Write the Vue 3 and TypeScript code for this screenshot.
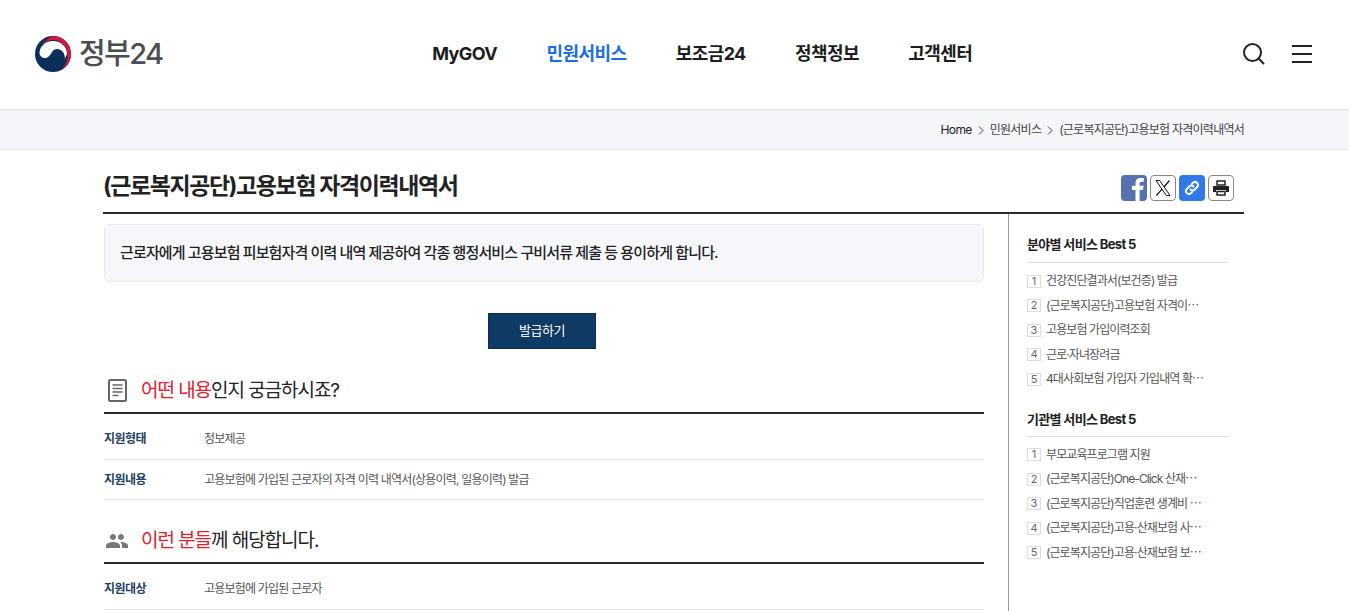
<script setup lang="ts">
const nav = [
  { label: 'MyGOV', active: false },
  { label: '민원서비스', active: true },
  { label: '보조금24', active: false },
  { label: '정책정보', active: false },
  { label: '고객센터', active: false },
]
const best1 = ['건강진단결과서(보건증) 발급', '(근로복지공단)고용보험 자격이⋯', '고용보험 가입이력조회', '근로·자녀장려금', '4대사회보험 가입자 가입내역 확⋯']
const best2 = ['부모교육프로그램 지원', '(근로복지공단)One-Click 산재⋯', '(근로복지공단)직업훈련 생계비 ⋯', '(근로복지공단)고용·산재보험 사⋯', '(근로복지공단)고용·산재보험 보⋯']
const groups = [
  { title: '분야별 서비스 Best 5', items: best1 },
  { title: '기관별 서비스 Best 5', items: best2 },
]
</script>

<template>
  <div class="page">
    <header class="top">
      <a class="logo">
        <svg class="emblem" width="38" height="38" viewBox="0 0 38 38">
          <circle cx="19" cy="19" r="18" fill="#0b2f5b" />
          <path d="M8 10C12 4 17 1.500 21 1 30 2 37 10 37 19 37 26 33 32 27 35.500 31 31 34 26 33.500 19 33 11 27 5 19 5 15 5 11 7 8 10Z" fill="#d6173a" />
          <path d="M5.500 19C5 12 11 6 19 6 27 6 33 12 33 19L26 34 10 30Z" fill="#fff" />
          <path d="M26 34.500C31 30 32.500 22 29 17 26 13 20 13 18 17 16 21 13 23.500 10 23 7.500 22.500 6 21 5.500 19 5 27 11 36 19 36 22 36 24 35.500 26 34.500Z" fill="#0b2f5b" />
        </svg>
        <span class="logo-text">정부24</span>
      </a>
      <nav class="nav">
        <a v-for="n in nav" :key="n.label" :class="{ active: n.active }">{{ n.label }}</a>
      </nav>
      <div class="tools">
        <svg width="24" height="24" viewBox="0 0 24 24" fill="none" stroke="#222" stroke-width="2">
          <circle cx="10.500" cy="10.500" r="8.500" />
          <path d="M16.800 16.800 22 22" />
        </svg>
        <div class="burger"><i></i><i></i><i></i></div>
      </div>
    </header>

    <div class="crumb">
      <div class="crumb-in">
        <span class="home">Home</span>
        <svg class="chev" width="6" height="9" viewBox="0 0 6 9" fill="none" stroke="#444"><path d="M1 .5 5 4.500 1 8.500" /></svg>
        <span>민원서비스</span>
        <svg class="chev" width="6" height="9" viewBox="0 0 6 9" fill="none" stroke="#444"><path d="M1 .5 5 4.500 1 8.500" /></svg>
        <span>(근로복지공단)고용보험 자격이력내역서</span>
      </div>
    </div>

    <main class="wrap">
      <div class="title-row">
        <h1>(근로복지공단)고용보험 자격이력내역서</h1>
        <div class="share">
          <span class="sq fb">
            <svg width="26" height="26" viewBox="0 0 26 26"><path d="M14.500 26V15h-3.600v-4.200h3.600V8.200c0-3.400 2.100-5.200 5-5.200h3.300v3.800h-2.200c-1.600 0-2 .8-2 1.900v2.100h4l-.6 4.200h-3.400v11z" fill="#fff" /></svg>
          </span>
          <span class="sq out">
            <svg width="18" height="18" viewBox="0 0 18 18" fill="none" stroke="#111"><path d="M2 1.500h3.600L16 16.500h-3.600z" /><path d="M15.400 1.500 10 8M8 10.200 2.400 16.500" stroke-width="1.200" /></svg>
          </span>
          <span class="sq link">
            <svg width="18" height="18" viewBox="0 0 18 18" fill="none" stroke="#fff" stroke-width="2" stroke-linecap="round"><path d="M7.500 10.500a3 3 0 0 0 4.300 0l2.600-2.700a3 3 0 0 0-4.200-4.200L9 4.800" /><path d="M10.500 7.500a3 3 0 0 0-4.300 0L3.600 10.200a3 3 0 0 0 4.200 4.200L9 13.200" /></svg>
          </span>
          <span class="sq out">
            <svg width="18" height="18" viewBox="0 0 18 18"><path d="M5 2h8v4H5z" fill="none" stroke="#222" stroke-width="1.500" /><path d="M2 7h14a1 1 0 0 1 1 1v5h-3v-2H4v2H1V8a1 1 0 0 1 1-1z" fill="#222" /><path d="M5 12.500h8V16H5z" fill="none" stroke="#222" stroke-width="1.500" /></svg>
          </span>
        </div>
      </div>

      <div class="cols">
        <section class="left">
          <div class="notice">근로자에게 고용보험 피보험자격 이력 내역 제공하여 각종 행정서비스 구비서류 제출 등 용이하게 합니다.</div>
          <div class="btn-row"><a class="btn">발급하기</a></div>

          <div class="sec-head">
            <svg width="24" height="24" viewBox="0 0 24 24" fill="none" stroke="#666" stroke-width="2">
              <rect x="4" y="2" width="17" height="21" rx="1.500" />
              <path d="M7.500 7h10M7.500 10.500h10M7.500 14h10M7.500 17.500h6" stroke-width="1.700" />
            </svg>
            <h2><em>어떤 내용</em>인지 궁금하시죠?</h2>
          </div>
          <dl class="row"><dt>지원형태</dt><dd>정보제공</dd></dl>
          <dl class="row"><dt>지원내용</dt><dd>고용보험에 가입된 근로자의 자격 이력 내역서(상용이력, 일용이력) 발급</dd></dl>

          <div class="sec-head">
            <svg class="people" width="24" height="24" viewBox="0 0 24 24" fill="#777">
              <path d="M16 11c1.660 0 2.990-1.340 2.990-3S17.660 5 16 5s-3 1.340-3 3 1.340 3 3 3zm-8 0c1.660 0 2.990-1.340 2.990-3S9.660 5 8 5 5 6.340 5 8s1.340 3 3 3zm0 2c-2.330 0-7 1.170-7 3.500V19h14v-2.500C15 14.170 10.330 13 8 13zm8 0c-.290 0-.620.020-.970.050 1.160.840 1.970 1.970 1.970 3.450V19h6v-2.500c0-2.330-4.670-3.500-7-3.500z" />
            </svg>
            <h2><em>이런 분들</em>께 해당합니다.</h2>
          </div>
          <dl class="row"><dt>지원대상</dt><dd>고용보험에 가입된 근로자</dd></dl>
        </section>

        <aside class="side">
          <div v-for="g in groups" :key="g.title" class="group">
            <h3>{{ g.title }}</h3>
            <ol>
              <li v-for="(it, i) in g.items" :key="it">
                <span class="num">{{ i + 1 }}</span>
                <span class="txt">{{ it }}</span>
              </li>
            </ol>
          </div>
        </aside>
      </div>
    </main>
  </div>
</template>

<style>
html, body { margin: 0; background: #fff; overflow: hidden; }
</style>

<style scoped>
.page {
  height: 611px;
  overflow: hidden;
  font-family: Inter, "Noto Sans CJK KR", sans-serif;
  color: #222;
}
.top {
  height: 110px;
  box-sizing: border-box;
  border-bottom: 1px solid #e0e2e6;
  display: flex;
  align-items: center;
  padding: 0 37px 1px 35px;
  justify-content: space-between;
}
.logo { display: flex; align-items: center; gap: 7px; }
.emblem { margin-left: -1px; }
.logo-text {
  font-size: 29px;
  font-weight: 500;
  color: #4a4d52;
  letter-spacing: -1.6px;
  line-height: 38px;
}
.nav {
  display: flex;
  gap: 49.4px;
  font-size: 18px;
  font-weight: 700;
  line-height: 24px;
  letter-spacing: -0.6px;
  color: #1d1d1d;
}
.nav .active { color: #1a6fe0; }
.tools { display: flex; align-items: center; gap: 26px; }
.burger { width: 20px; display: flex; flex-direction: column; gap: 6px; }
.burger i { display: block; height: 2px; background: #222; }
.crumb {
  height: 40px;
  box-sizing: border-box;
  background: #f4f6fa;
  border-bottom: 1px solid #e8eaee;
}
.crumb-in {
  width: 1140px;
  margin-left: 104px;
  height: 39px;
  display: flex;
  justify-content: flex-end;
  align-items: center;
  gap: 6px;
  font-size: 12px;
  line-height: 18px;
  letter-spacing: -0.75px;
  color: #444;
}
.crumb-in .home { color: #222; letter-spacing: -0.6px; }
.chev { margin-top: 2px; }
.wrap { width: 1141px; margin-left: 103px; }
.title-row {
  height: 64px;
  box-sizing: border-box;
  border-bottom: 2px solid #2b2b2b;
  display: flex;
  justify-content: space-between;
  align-items: flex-start;
  padding-right: 10px;
}
h1 {
  margin: 18px 0 0;
  font-size: 23px;
  line-height: 36px;
  font-weight: 700;
  letter-spacing: -1.4px;
  color: #222;
}
.share { display: flex; gap: 3px; margin-top: 25px; }
.sq {
  width: 26px;
  height: 26px;
  box-sizing: border-box;
  border-radius: 4px;
  display: flex;
  align-items: center;
  justify-content: center;
  overflow: hidden;
}
.fb { background: #5472b0; }
.out { background: #fff; border: 1px solid #888; }
.link { background: #2e7ae6; }
.cols { display: flex; }
.left { width: 881px; padding-left: 1px; box-sizing: border-box; }
.notice {
  margin-top: 10px;
  height: 58px;
  box-sizing: border-box;
  background: #f5f7fa;
  border: 1px solid #e6e8ec;
  border-radius: 6px;
  padding: 0 15px;
  line-height: 56px;
  font-size: 15px;
  font-weight: 500;
  letter-spacing: -0.86px;
  color: #222;
}
.btn-row { display: flex; justify-content: center; margin-top: 31px; }
.btn {
  width: 108px;
  height: 36px;
  background: #0e3a63;
  border: 1px solid #0c3054;
  box-sizing: border-box;
  color: #fff;
  font-size: 13px;
  letter-spacing: -0.5px;
  text-align: center;
  line-height: 33px;
  margin-left: -4px;
}
.sec-head {
  display: flex;
  align-items: center;
  gap: 12px;
  height: 44px;
  padding-left: 1px;
  margin-top: 19px;
  border-bottom: 2px solid #2b2b2b;
}
.row + .sec-head { margin-top: 18px; }
.people { margin-top: 2px; }
h2 {
  margin: 0;
  padding-top: 1px;
  font-size: 19px;
  line-height: 28px;
  font-weight: 400;
  letter-spacing: -1.05px;
  color: #222;
}
h2 em { font-style: normal; color: #e3202c; }
.row {
  margin: 0;
  height: 46px;
  box-sizing: border-box;
  padding-top: 4px;
  border-bottom: 1px solid #e3e5e8;
  display: flex;
  align-items: center;
  font-size: 12px;
  line-height: 18px;
  letter-spacing: -0.8px;
}
.row + .row { height: 40px; padding: 1px 0 0; }
.row dt { width: 100px; font-weight: 700; color: #1f3f66; letter-spacing: -0.5px; }
.row dd { margin: 0; color: #555; }
.side {
  width: 236px;
  height: 400px;
  border-left: 1px solid #999;
  margin-left: 24px;
  padding: 11px 17px 0 18px;
  box-sizing: border-box;
}
.group + .group { margin-top: 8px; }
.group + .group h3 { height: 37px; }
h3 {
  margin: 0;
  height: 38px;
  box-sizing: border-box;
  border-bottom: 1px solid #dcdee2;
  font-size: 13px;
  line-height: 38px;
  font-weight: 700;
  letter-spacing: -0.65px;
  color: #222;
}
ol { list-style: none; margin: 6px 0 0; padding: 0; }
li {
  height: 24.5px;
  display: flex;
  align-items: center;
  gap: 5px;
  font-size: 12px;
  line-height: 18px;
  letter-spacing: -0.9px;
  color: #555;
}
.num {
  width: 14px;
  height: 13px;
  flex: none;
  box-sizing: border-box;
  border: 1px solid #ddd;
  font-size: 11px;
  line-height: 11px;
  text-align: center;
  color: #666;
  letter-spacing: 0;
}
.txt { white-space: nowrap; }
</style>
